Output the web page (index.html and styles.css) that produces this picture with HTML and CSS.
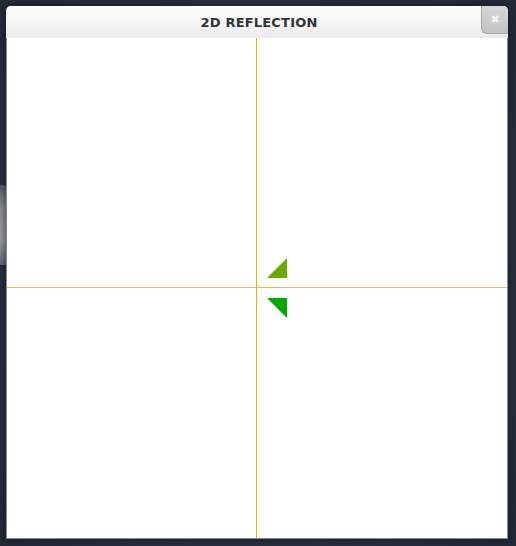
FILE: index.html
```
<!DOCTYPE html>
<html>
<head>
<meta charset="utf-8">
<link rel="stylesheet" href="styles.css">
</head>
<body>
<div class="desk-item"></div>
<div class="window">
  <div class="titlebar">
    <span class="title">2D REFLECTION</span>
    <div class="close">&#x2716;</div>
  </div>
  <svg class="canvas" width="500" height="500" viewBox="0 0 500 500">
    <rect width="500" height="500" fill="#ffffff"/>
    <line x1="249.5" y1="0" x2="249.5" y2="500" stroke="#ffa500" stroke-width="1"/>
    <line x1="0" y1="249.5" x2="500" y2="249.5" stroke="#f3b558" stroke-width="1"/>
    <polygon points="260,240 280,240 280,220" fill="#6aaa00"/>
    <polygon points="260,260 280,260 280,280" fill="#00aa00"/>
  </svg>
</div>
</body>
</html>
```
FILE: styles.css
```
html, body {
  margin: 0;
  padding: 0;
}
body {
  width: 516px;
  height: 546px;
  background: radial-gradient(ellipse at 50% 50%, #3a4354 0%, #2c3342 60%, #252b38 100%);
  padding: 6px 0 0 6px;
  box-sizing: border-box;
  position: relative;
  overflow: hidden;
}
.desk-item {
  position: absolute;
  left: 0;
  top: 185px;
  width: 6px;
  height: 80px;
  background: linear-gradient(to bottom, #5b6270, #9a9c9f 30%, #a8a9ab 70%, #6a707a);
}
.window {
  width: 502px;
  box-sizing: border-box;
  border: 1px solid #8a8a8a;
  border-top: none;
  background: #ffffff;
  box-shadow: 0 0 8px 2px rgba(15, 20, 30, 0.6);
  border-radius: 5px 5px 0 0;
  position: relative;
}
.titlebar {
  height: 32px;
  background: linear-gradient(to bottom, #fdfdfd 0%, #f3f3f3 60%, #ebebeb 100%);
  border-radius: 5px 5px 0 0;
  display: flex;
  align-items: center;
  justify-content: center;
  position: relative;
  margin: 0 -1px;
}
.title {
  font-family: "DejaVu Sans", sans-serif;
  font-weight: bold;
  font-size: 13px;
  color: #2e3436;
  letter-spacing: 0.2px;
  margin-left: 4px;
  margin-top: 1px;
}
.close {
  position: absolute;
  top: 0;
  right: 0;
  width: 27px;
  height: 28px;
  box-sizing: border-box;
  background: linear-gradient(to bottom, #d6d6d6, #c4c4c4);
  border-left: 1px solid #a8a8a8;
  border-bottom: 1px solid #a8a8a8;
  border-radius: 0 5px 0 6px;
  color: #f6f6f6;
  font-family: "DejaVu Sans", sans-serif;
  font-size: 11px;
  display: flex;
  align-items: center;
  justify-content: center;
  padding-bottom: 1px;
}
.canvas {
  display: block;
}
```
